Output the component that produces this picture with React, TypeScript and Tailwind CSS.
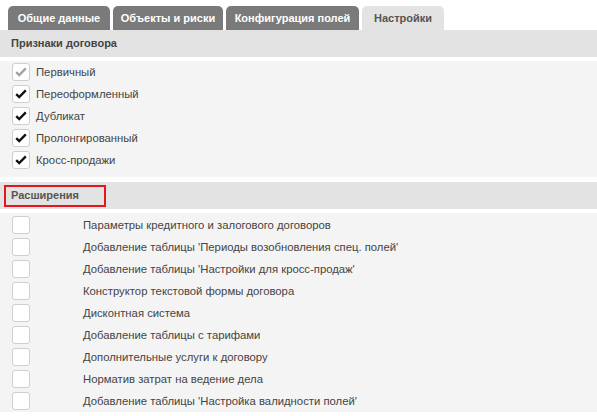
import { useState } from "react";

const tabs = [
  { id: 1, label: "Общие данные", width: "w-[102px]" },
  { id: 2, label: "Объекты и риски", width: "w-[110px]" },
  { id: 3, label: "Конфигурация полей", width: "w-[133px]" },
  { id: 4, label: "Настройки", width: "w-[82px]" },
];

const signs = [
  { id: 1, label: "Первичный", checked: true, disabled: true },
  { id: 2, label: "Переоформленный", checked: true },
  { id: 3, label: "Дубликат", checked: true },
  { id: 4, label: "Пролонгированный", checked: true },
  { id: 5, label: "Кросс-продажи", checked: true },
];

const extensions = [
  "Параметры кредитного и залогового договоров",
  "Добавление таблицы 'Периоды возобновления спец. полей'",
  "Добавление таблицы 'Настройки для кросс-продаж'",
  "Конструктор текстовой формы договора",
  "Дисконтная система",
  "Добавление таблицы с тарифами",
  "Дополнительные услуги к договору",
  "Норматив затрат на ведение дела",
  "Добавление таблицы 'Настройка валидности полей'",
];

const Box = ({ checked, disabled }: { checked?: boolean; disabled?: boolean }) => (
  <span className="w-[18px] h-[18px] shrink-0 rounded-[3px] border border-[#cfcfcf] bg-white flex items-center justify-center">
    {checked && (
      <svg width="18" height="18" viewBox="0 0 18 18">
        <path
          d="M3.6 9.2 L7 12.5 L14.4 5"
          fill="none"
          stroke={disabled ? "#a3a3a3" : "#111"}
          strokeWidth="2.7"
        />
      </svg>
    )}
  </span>
);

const App = () => {
  const [active, setActive] = useState(4);

  return (
    <div className="w-[597px] h-[416px] bg-white overflow-hidden text-[11px] text-[#444] font-['Liberation_Sans',Arial,sans-serif]">
      {/* Tabs */}
      <div className="flex gap-[3px] pl-[8px] pt-[6px]">
        {tabs.map((t) => (
          <div
            key={t.id}
            onClick={() => setActive(t.id)}
            className={`${t.width} h-[24px] rounded-t-[5px] flex items-center justify-center font-bold cursor-pointer ${
              active === t.id ? "bg-[#e3e3e3] text-[#555]" : "bg-[#7a7a7a] text-white"
            }`}
          >
            {t.label}
          </div>
        ))}
      </div>

      {/* Признаки договора */}
      <div className="h-[27px] bg-[#e3e3e3] flex items-center pl-[11px] font-bold text-[#444]">
        Признаки договора
      </div>
      <div className="mt-[4px] bg-[#f4f4f4] pb-[6px] text-[11.3px]">
        {signs.map((s) => (
          <div key={s.id} className="h-[22px] flex items-center pl-[12px] gap-[6px]">
            <Box checked={s.checked} disabled={s.disabled} />
            <span className="pt-[1px]">{s.label}</span>
          </div>
        ))}
      </div>

      {/* Расширения */}
      <div className="mt-[5px] h-[27px] bg-[#e3e3e3] flex items-center pl-[4px]">
        <span className="w-[102px] h-[22px] border-2 border-[#e5161d] flex items-center pl-[5px] font-bold text-[#555]">
          Расширения
        </span>
      </div>
      <div className="mt-[4px] bg-[#f4f4f4] pt-[1px] text-[11.3px]">
        {extensions.map((e) => (
          <div key={e} className="h-[22px] flex items-center pl-[12px]">
            <Box />
            <span className="ml-[53px] pt-[1px]">{e}</span>
          </div>
        ))}
      </div>
    </div>
  );
};

export default App;
